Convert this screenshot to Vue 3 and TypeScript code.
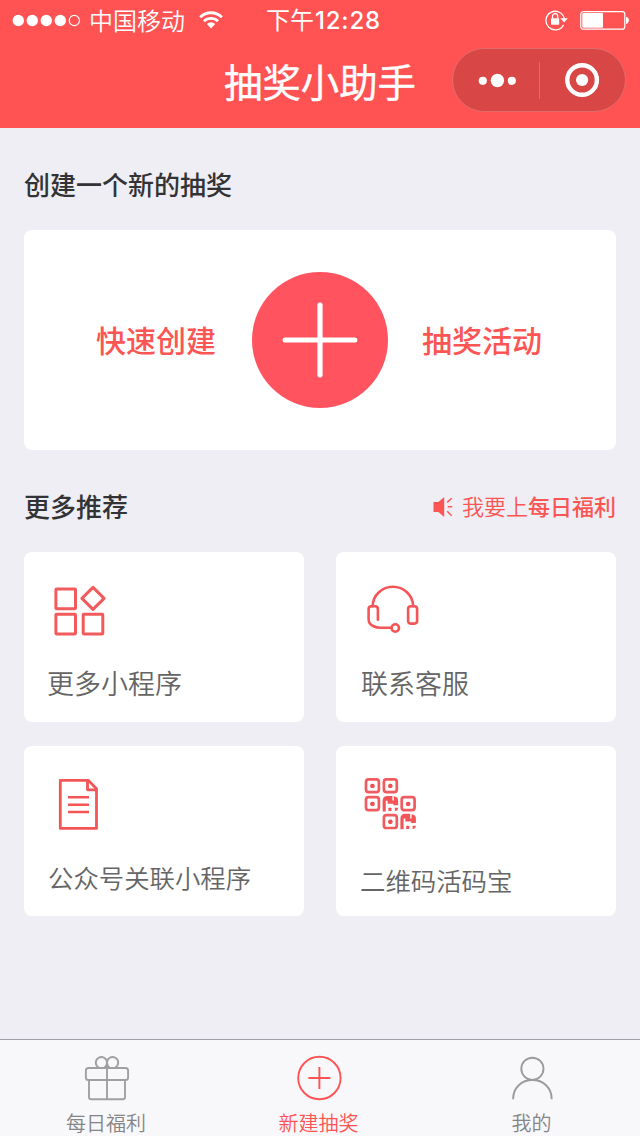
<script setup lang="ts">
interface Entry {
  key: string
  label: string
}

const entries: Entry[] = [
  { key: 'apps', label: '更多小程序' },
  { key: 'service', label: '联系客服' },
  { key: 'article', label: '公众号关联小程序' },
  { key: 'qrcode', label: '二维码活码宝' },
]

const tabs: Entry[] = [
  { key: 'gift', label: '每日福利' },
  { key: 'create', label: '新建抽奖' },
  { key: 'mine', label: '我的' },
]

const activeTab = 'create'

const qrFinders: [number, number][] = [
  [2.7, 2],
  [20.6, 2],
  [2.7, 19.9],
  [38.4, 19.9],
  [20.6, 37.8],
]
const qrFragments: [number, number][] = [
  [20.6, 19.9],
  [38.4, 37.8],
]
</script>

<template>
  <div class="screen">
    <header class="top">
      <div class="status">
        <div class="status-left">
          <svg class="signal" width="70" height="14" viewBox="0 0 70 14">
            <circle v-for="n in 4" :key="n" :cx="6.3 + (n - 1) * 14" cy="7.5" r="5.7" fill="#fff" />
            <circle cx="62.3" cy="7.5" r="5.1" fill="none" stroke="#fff" stroke-width="1.1" />
          </svg>
          <span class="carrier">中国移动</span>
          <svg class="wifi" width="24" height="18" viewBox="0 0 24 18">
            <path d="M1.2 6.2A15.4 15.4 0 0 1 22.8 6.2" fill="none" stroke="#fff" stroke-width="2.9" />
            <path d="M5 10.3A10 10 0 0 1 19 10.3" fill="none" stroke="#fff" stroke-width="2.7" />
            <path d="M7.8 13A6 6 0 0 1 16.2 13L12 17.6Z" fill="#fff" />
          </svg>
        </div>
        <div class="time">下午<span class="digits">12:28</span></div>
        <div class="status-right">
          <svg width="25" height="22" viewBox="0 0 25 22">
            <path d="M19.6 15.7A9.3 9.3 0 1 1 20.4 10" fill="none" stroke="#fff" stroke-width="1.3" />
            <path d="M16.4 9.2H23.8L20.1 13.4Z" fill="#fff" />
            <rect x="7" y="9.2" width="8.2" height="6.5" rx=".6" fill="#fff" />
            <path d="M8.5 9.6V7.2A2.6 2.6 0 0 1 13.7 7.2V9.6" fill="none" stroke="#fff" stroke-width="1.3" />
          </svg>
          <svg width="50" height="20" viewBox="0 0 50 20">
            <rect x=".8" y="1.6" width="44" height="17.6" rx="2.5" fill="none" stroke="#fff" stroke-width="1.2" />
            <rect x="2.3" y="3.1" width="20.7" height="14.6" rx="1" fill="#fff" />
            <path d="M46 6.8C49.8 7.3 49.8 13.5 46 14Z" fill="#fff" />
          </svg>
        </div>
      </div>
      <div class="nav">
        <h1 class="nav-title">抽奖小助手</h1>
        <div class="capsule">
          <svg class="capsule-more" width="86" height="62" viewBox="0 0 86 62">
            <circle cx="29.8" cy="31.8" r="4.1" fill="#fff" />
            <circle cx="44.4" cy="31.5" r="6.7" fill="#fff" />
            <circle cx="58.8" cy="31.8" r="4.1" fill="#fff" />
          </svg>
          <i class="capsule-line"></i>
          <svg width="85" height="62" viewBox="0 0 85 62">
            <circle cx="42.1" cy="31" r="14.8" fill="none" stroke="#fff" stroke-width="4.4" />
            <circle cx="42.1" cy="31" r="6.1" fill="#fff" />
          </svg>
        </div>
      </div>
    </header>

    <main class="content">
      <div class="section-head">
        <h2>创建一个新的抽奖</h2>
      </div>
      <section class="create-card">
        <span class="create-text">快速创建</span>
        <svg class="create-button" width="136" height="136" viewBox="0 0 136 136">
          <circle cx="68" cy="68" r="68" fill="#ff535f" />
          <path d="M33.2 68H102.8M68 33.2V102.8" stroke="#fff" stroke-width="5.2" stroke-linecap="round" />
        </svg>
        <span class="create-text">抽奖活动</span>
      </section>

      <div class="section-head">
        <h2>更多推荐</h2>
        <div class="promo">
          <svg width="20" height="22" viewBox="0 0 20 22">
            <path d="M.5 6.9H5.4L11.2 1.9V21.9L5.4 17H.5Z" fill="#fb5654" />
            <path d="M14.2 7.4L18.7 3.2M14.8 11.7H19.2M14.2 16.2L18.7 20.7" fill="none" stroke="#fb5654" stroke-width="1.5" />
          </svg>
          <span class="promo-text">我要上<b>每日福利</b></span>
        </div>
      </div>

      <section class="grid">
        <article v-for="entry in entries" :key="entry.key" class="card" :class="entry.key">
          <svg class="card-icon" width="60" height="60" viewBox="0 0 60 60">
            <g v-if="entry.key === 'apps'" fill="none" stroke="#f15b5c" stroke-width="3" stroke-linejoin="round">
              <rect x="5.9" y="7.1" width="19.6" height="19.6" rx=".6" />
              <rect x="5.9" y="32.3" width="19.6" height="19.6" rx=".6" />
              <rect x="33.2" y="32.3" width="19.6" height="19.6" rx=".6" />
              <path d="M43 5.4L54.1 16.4L43 27.4L31.9 16.4Z" />
            </g>
            <g v-else-if="entry.key === 'service'" fill="none" stroke="#f45557" stroke-width="2.6" stroke-linecap="round">
              <path d="M10.7 24.2A20 19.2 0 0 1 51.1 24.2" />
              <path d="M15.9 37.8V27.2Q15.9 24.3 13 24.3H9.4Q6.6 24.3 6.6 27.2V37Q6.6 42 11 44Q14.5 45.8 18.5 45.8H29" />
              <circle cx="33.3" cy="46" r="3.7" />
              <rect x="46.1" y="24.3" width="9" height="17.3" rx="2.8" />
            </g>
            <g v-else-if="entry.key === 'article'" fill="none" stroke="#f45557" stroke-width="2.8" stroke-linejoin="round">
              <path d="M10.3 4.4H38.4L46.5 12.8V52.4H10.3Z" />
              <path d="M37.5 4.8V13.8H46.4" />
              <path d="M18 21.3H39M18 28.7H39M18 36H39" stroke-width="2.5" />
            </g>
            <g v-else>
              <g v-for="([x, y], i) in qrFinders" :key="'f' + i" :transform="`translate(${x} ${y})`">
                <rect x="1.3" y="1.3" width="12.9" height="12.9" rx="2.6" fill="none" stroke="#ef5b5e" stroke-width="2.7" />
                <rect x="5.6" y="5.8" width="4.3" height="4.3" rx="1.6" fill="#ef4f52" />
              </g>
              <g v-for="([x, y], i) in qrFragments" :key="'q' + i" :transform="`translate(${x} ${y})`" fill="#f25558">
                <path d="M0 5Q0 0 5 0H9.8V4.6H11.2V.4Q15.5 .8 15.5 4.5V9.3H10.8V7.8H5V4.8H3.2V15.5H0Z" />
                <rect x="5.8" y="11.9" width="3.1" height="3.2" rx=".5" />
                <path d="M12.2 11.9H15.5Q15.5 15 12.2 15.2Z" />
              </g>
            </g>
          </svg>
          <span class="card-label">{{ entry.label }}</span>
        </article>
      </section>
    </main>

    <nav class="tabbar">
      <div v-for="tab in tabs" :key="tab.key" class="tab" :class="{ active: tab.key === activeTab }">
        <svg width="48" height="48" viewBox="0 0 48 48" fill="none" stroke="currentColor" stroke-width="1.9">
          <g v-if="tab.key === 'gift'" stroke="#a0a0a2">
            <rect x="3.9" y="14" width="42.2" height="12" rx="2.6" />
            <path d="M7 26V43Q7 45.3 9.3 45.3H40.7Q43 45.3 43 43V26" />
            <path d="M25 9V45" />
            <path d="M25 8.6A5.6 5.6 0 1 0 16.5 13.4M25 8.6A5.6 5.6 0 1 1 33.5 13.4M25 8.6Q25 12 22.5 13.6M25 8.6Q25 12 27.5 13.6" />
          </g>
          <g v-else-if="tab.key === 'create'">
            <circle cx="24.4" cy="24" r="21.2" />
            <path d="M13.4 24H35.4M24.4 13V35" />
          </g>
          <g v-else stroke="#9b9b9d">
            <circle cx="24.4" cy="14.8" r="11.1" />
            <path d="M5.1 45.2C5.1 33.5 13.8 26 24.4 26S43.7 33.5 43.7 45.2" />
          </g>
        </svg>
        <span>{{ tab.label }}</span>
      </div>
    </nav>
  </div>
</template>

<style>
body {
  margin: 0;
  background: #efeef5;
}
</style>

<style scoped>
.screen {
  display: flex;
  flex-direction: column;
  width: 640px;
  height: 1136px;
  overflow: hidden;
  background: #efeef5;
  font-family: "Noto Sans CJK SC", sans-serif;
}
.screen svg {
  display: block;
  flex: none;
}
.top {
  height: 128px;
  flex: none;
  background: #ff5252;
  color: #fff;
}
.status {
  display: grid;
  grid-template-columns: 266px 1fr auto;
  align-items: center;
  height: 40px;
}
.status-left {
  display: flex;
  align-items: center;
  padding-left: 12px;
}
.carrier {
  margin: 0 14px 0 7px;
  font-size: 24px;
  line-height: 38px;
  font-weight: 350;
}
.time {
  font-size: 24px;
  line-height: 38px;
}
.digits {
  margin-left: 1px;
  font-family: Inter, sans-serif;
  font-weight: 500;
  font-size: 24px;
  letter-spacing: 0.8px;
}
.status-right {
  display: flex;
  align-items: center;
  gap: 11px;
  padding-right: 10px;
}
.nav {
  display: flex;
  align-items: center;
  justify-content: space-between;
  height: 88px;
  padding: 0 14px 0 224px;
  box-sizing: border-box;
}
.nav-title {
  margin: 0;
  padding-bottom: 8px;
  font-size: 38.4px;
  line-height: 48px;
  font-weight: 400;
  -webkit-text-stroke: 0.4px #fff;
}
.capsule {
  display: flex;
  align-items: center;
  width: 174px;
  height: 64px;
  margin-bottom: 8px;
  box-sizing: border-box;
  border: 1px solid #e36c6b;
  border-radius: 32px;
  background: #d94646;
}
.capsule-line {
  width: 1px;
  height: 37px;
  background: #e46a69;
}
.content {
  flex: 1;
  padding: 0 24px;
}
.section-head {
  display: flex;
  align-items: center;
  justify-content: space-between;
  height: 102px;
  padding-top: 9px;
  box-sizing: border-box;
}
.section-head h2 {
  margin: 0;
  color: #333336;
  font-size: 26px;
  line-height: 40px;
  font-weight: 500;
}
.create-card {
  display: grid;
  grid-template-columns: 120px 136px 120px;
  align-items: center;
  justify-content: center;
  column-gap: 35px;
  height: 220px;
  border-radius: 8px;
  background: #fff;
}
.create-text {
  margin-left: -1px;
  padding-bottom: 3px;
  color: #fb5554;
  font-size: 30px;
  line-height: 40px;
  font-weight: 500;
  white-space: nowrap;
}
.promo {
  display: flex;
  align-items: center;
  gap: 9px;
  color: #fb5654;
  font-size: 22px;
  line-height: 32px;
  font-weight: 350;
}
.promo-text {
  padding-bottom: 2px;
}
.promo b {
  font-weight: 500;
}
.grid {
  display: grid;
  grid-template-columns: 280px 280px;
  grid-auto-rows: 170px;
  gap: 24px 32px;
}
.card {
  display: flex;
  flex-direction: column;
  padding: 30px 0 0 24px;
  box-sizing: border-box;
  border-radius: 8px;
  background: #fff;
}
.card-icon {
  margin: 0 0 22px 2px;
}
.card-label {
  padding-top: 1px;
  color: #656565;
  font-size: 27px;
  line-height: 36px;
  font-weight: 350;
}
.apps .card-label {
  margin-left: -1px;
}
.service .card-label {
  margin-left: 1px;
}
.article .card-label {
  font-size: 25.4px;
}
.qrcode .card-label {
  padding-top: 4px;
  font-size: 25.4px;
}
.tabbar {
  display: grid;
  grid-template-columns: 212px 213px 213px;
  height: 97px;
  flex: none;
  box-sizing: border-box;
  border-top: 1px solid #a1a0a8;
  background: #f8f8fb;
}
.tab {
  display: flex;
  flex-direction: column;
  align-items: center;
  padding-top: 14px;
  color: #858587;
  font-size: 20px;
  line-height: 28px;
  font-weight: 350;
}
.tab span {
  margin-top: 7px;
}
.tab.active {
  color: #ff5252;
}
</style>
